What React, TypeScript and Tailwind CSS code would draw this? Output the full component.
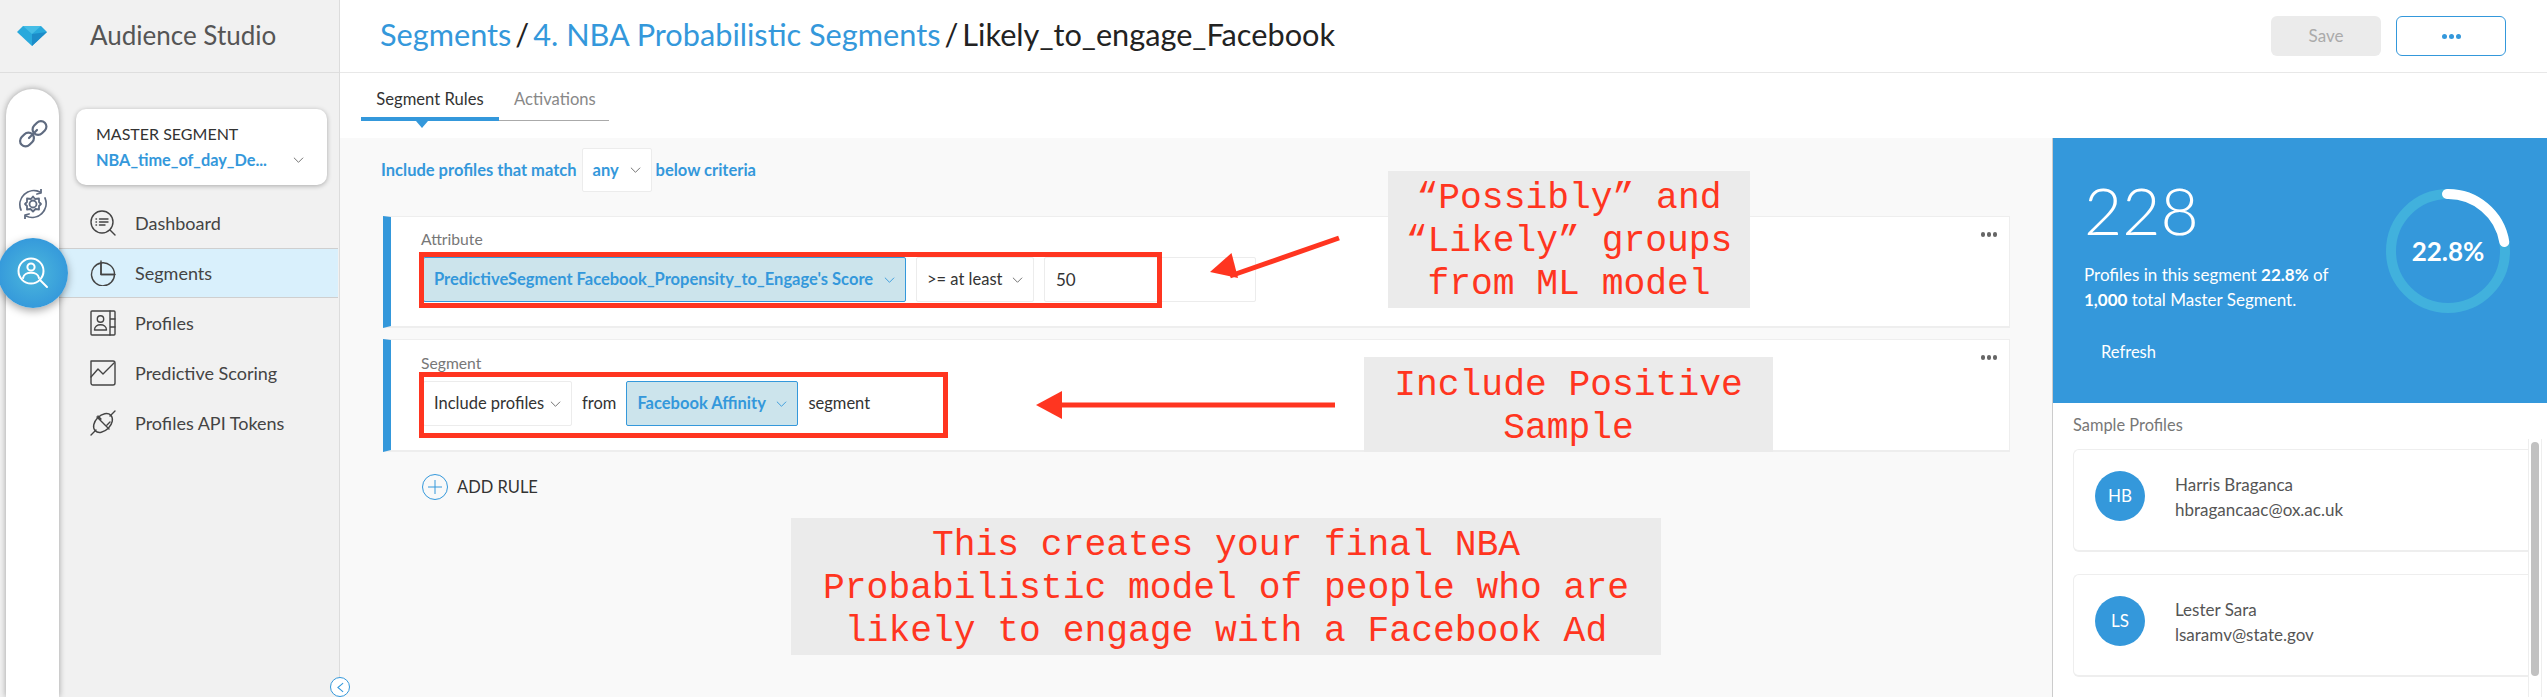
const NUNITO = "font-['Lato','Noto_Sans',sans-serif]";

const Chevron = ({ className = "" }: { className?: string }) => (
  <svg viewBox="0 0 12 8" className={`w-[11px] h-[8px] shrink-0 ${className}`} fill="none" stroke="currentColor" strokeWidth="1">
    <path d="M1 1.5 L6 6.5 L11 1.5" />
  </svg>
);

const NavIcon = ({ name }: { name: string }) => (
  <svg viewBox="0 0 26 26" className="w-[26px] h-[26px] shrink-0" fill="none" stroke="#444" strokeWidth="1.4" strokeLinecap="round" strokeLinejoin="round">
    {name === "dashboard" && (
      <>
        <circle cx="12" cy="12" r="11" />
        <path d="M20 20 L25 25" />
        <path d="M6 9h.5M6 12h.5M6 15h.5M9.5 9H18M9.5 12H18M9.5 15H15" />
      </>
    )}
    {name === "segments" && (
      <>
        <path d="M11 3 A11.5 11.5 0 1 0 24.5 14.5 H11 Z" />
        <path d="M11 3 A11.5 11.5 0 0 1 24.5 14.5" />
        <path d="M11 1 V14.5 H25" />
      </>
    )}
    {name === "profiles" && (
      <>
        <rect x="1" y="1" width="24" height="24" rx="1" />
        <path d="M20 1v24M20 9h5M20 17h5" />
        <circle cx="10.5" cy="9" r="3.2" />
        <path d="M4.5 20c0-7 12-7 12 0Z" />
      </>
    )}
    {name === "scoring" && (
      <>
        <path d="M5 1H23a2 2 0 0 1 2 2V23a2 2 0 0 1-2 2H3a2 2 0 0 1-2-2V1Z" />
        <path d="M1 17 L8 9 L13 14 L24 3" />
      </>
    )}
    {name === "tokens" && (
      <>
        <ellipse cx="13" cy="13" rx="11" ry="7.5" transform="rotate(-45 13 13)" />
        <path d="M7 7 L19 19M1 25 L6 20M20 6 L25 1M11 9 L8 6M17 15 L20 12" />
      </>
    )}
  </svg>
);

const navItems = [
  { name: "dashboard", label: "Dashboard" },
  { name: "segments", label: "Segments", active: true },
  { name: "profiles", label: "Profiles" },
  { name: "scoring", label: "Predictive Scoring" },
  { name: "tokens", label: "Profiles API Tokens" },
];

const Sidebar = () => (
  <aside className="w-[340px] shrink-0 flex flex-col bg-[#f1f1f1] border-r border-[#dcdcdc] relative">
    <div className="h-[73px] shrink-0 flex items-center border-b border-[#dedede]">
      <svg viewBox="0 0 30 20" className="w-[30px] h-[20px] ml-[17px]">
        <polygon points="0,6 6,0 24,0 30,6 15,20" fill="#29a9dc" />
        <polygon points="6,0 24,0 15,8" fill="#45bde6" />
        <polygon points="15,8 30,6 15,20" fill="#1c8cc9" />
      </svg>
      <span className="ml-[43px] text-[26px] leading-[30px] mb-[3px] text-[#555]">Audience Studio</span>
    </div>
    <div className="flex flex-1 min-h-0">
      <div className="w-[53px] ml-[6px] mt-[16px] shrink-0 bg-white rounded-t-[27px] shadow-[0_0_6px_rgba(0,0,0,0.35)] flex flex-col items-center pt-[30px] z-10">
        <svg viewBox="0 0 30 30" className="w-[30px] h-[30px]" fill="none" stroke="#5f6b80" strokeWidth="2.2" strokeLinecap="round" strokeLinejoin="round">
          <rect x="1.5" y="15" width="15" height="11" rx="5.5" transform="rotate(-45 9 20.5)" />
          <rect x="14" y="3.5" width="15" height="11" rx="5.5" transform="rotate(-45 21.5 9)" />
          <path d="M11 19 L19 11" />
        </svg>
        <svg viewBox="0 0 30 30" className="w-[30px] h-[30px] mt-[40px]" fill="none" stroke="#5f6b80" strokeWidth="1.8" strokeLinecap="round" strokeLinejoin="round">
          <path d="M3 21 A14 14 0 0 1 22 3" />
          <path d="M27 9 A14 14 0 0 1 8 27" />
          <path d="M23 0 L23 4 L19 5M7 30 L7 26 L11 25" />
          <circle cx="15" cy="15" r="3.5" />
          <path d="M15 7.5 L17 10 L21 9.5 L21 13 L23 15 L21 17 L21 20.5 L17.5 20 L15 22.5 L12.5 20 L9 20.5 L9 17 L7 15 L9 13 L9 9.5 L13 10 Z" />
        </svg>
        <div className="relative">
          <div className="absolute -left-[35px] top-[19px] w-[70px] h-[70px] rounded-full bg-[radial-gradient(circle,#4cb8dc_0%,#3498db_75%)] shadow-[0_3px_8px_rgba(0,0,0,0.35)] flex items-center justify-center">
            <svg viewBox="0 0 32 32" className="w-[32px] h-[32px]" fill="none" stroke="#fff" strokeWidth="2" strokeLinecap="round">
              <circle cx="14" cy="14" r="12.5" />
              <circle cx="14" cy="10" r="3.6" />
              <path d="M6 21c1-7 15-7 16 0" />
              <path d="M23 23 L30 30" />
            </svg>
          </div>
        </div>
      </div>
      <div className="flex-1 min-w-0 pt-[36px]">
        <div className="ml-[17px] w-[251px] h-[76px] bg-white rounded-[10px] shadow-[0_1px_5px_rgba(0,0,0,0.3)] pl-[20px] pt-[13px] relative">
          <div className="text-[16px] leading-[24px] text-[#333]">MASTER SEGMENT</div>
          <div className="flex items-center text-[#3498db] text-[16.3px] leading-[28px] font-bold">
            <span>NBA_time_of_day_De...</span>
            <Chevron className="ml-[26px] text-[#666]" />
          </div>
        </div>
        <nav className="mt-[13px] pr-[1px]">
          {navItems.map((item) => (
            <div
              key={item.name}
              className={
                item.active
                  ? "h-[50px] flex items-center pl-[31px] bg-[#d9f0fc] border-y border-[#cfcfcf]"
                  : "h-[50px] flex items-center pl-[31px]"
              }
            >
              <NavIcon name={item.name} />
              <span className="ml-[19px] text-[18px] text-[#444]">{item.label}</span>
            </div>
          ))}
        </nav>
      </div>
    </div>
    <div className="absolute right-[-11px] top-[677px] w-[20px] h-[20px] rounded-full bg-white border border-[#3498db] flex items-center justify-center z-20">
      <svg viewBox="0 0 8 12" className="w-[7px] h-[11px]" fill="none" stroke="#3498db" strokeWidth="1.2">
        <path d="M7 1 L1 6 L7 11" />
      </svg>
    </div>
  </aside>
);

const Select = ({ label, w, hi, bold }: { label: string; w: string; hi?: boolean; bold?: boolean }) => (
  <div
    className={`h-[45px] flex items-center justify-between px-[10px] rounded-[2px] border shrink-0 text-[16.5px] ${w} ${
      hi ? "bg-[#cce4ec] border-[#3498db] text-[#3498db]" : "bg-white border-[#ececec] text-[#333]"
    } ${bold ? "font-bold" : ""}`}
  >
    <span className="whitespace-nowrap">{label}</span>
    <Chevron className={hi ? "text-[#3498db]" : "text-[#666]"} />
  </div>
);

const Dots = () => (
  <div className="absolute right-[12px] top-[15px] flex gap-[2px]">
    <span className="w-[4px] h-[5px] rounded-full bg-[#666]" />
    <span className="w-[4px] h-[5px] rounded-full bg-[#666]" />
    <span className="w-[4px] h-[5px] rounded-full bg-[#666]" />
  </div>
);

const Note = ({ className, lines }: { className: string; lines: string[] }) => (
  <div className={`absolute bg-[#ebebeb] pt-[4px] flex flex-col justify-center items-center text-[#ff3520] font-['Liberation_Mono',monospace] text-[36.3px] leading-[43px] whitespace-pre ${className}`}>
    {lines.map((l) => (
      <div key={l}>{l}</div>
    ))}
  </div>
);

const Content = () => (
  <div className="flex-1 min-w-0 bg-[#f9f9f9] pl-[41px] pr-[42px] pt-[10px] relative">
    <div className="flex items-center h-[44px] text-[#3498db] text-[16.5px] font-bold">
      <span>Include profiles that match</span>
      <div className="ml-[5px] mr-[4px] w-[70px] h-[44px] bg-white border border-[#ececec] rounded-[2px] flex items-center justify-between px-[10px]">
        <span>any</span>
        <Chevron className="text-[#666]" />
      </div>
      <span>below criteria</span>
    </div>

    <div className="ml-[2px] mt-[24px] h-[112px] bg-white border border-[#eeeeee] border-b-2 border-l-8 border-l-[#3498db] relative pl-[30px]">
      <div className="h-[40px] pt-[12px] text-[15.7px] leading-[20px] text-[#777]">Attribute</div>
      <div className="flex gap-[10px] ml-[2px]">
        <Select label="PredictiveSegment Facebook_Propensity_to_Engage's Score" w="w-[483px]" hi bold />
        <Select label=">= at least" w="w-[118px]" />
        <div className="w-[212px] h-[45px] bg-white border border-[#ececec] rounded-[2px] flex items-center pl-[11px] text-[17px] text-[#333]">50</div>
      </div>
      <div className="absolute left-[28px] top-[35px] w-[743px] h-[56px] border-[5px] border-[#ff3520]" />
      <Dots />
    </div>

    <div className="ml-[2px] mt-[11px] h-[113px] bg-white border border-[#eeeeee] border-b-2 border-l-8 border-l-[#3498db] relative pl-[30px]">
      <div className="h-[41px] pt-[13px] text-[15.7px] leading-[20px] text-[#777]">Segment</div>
      <div className="flex items-center ml-[2px] text-[16.5px] text-[#333]">
        <Select label="Include profiles" w="w-[149px]" />
        <span className="ml-[10px]">from</span>
        <div className="ml-[10px]">
          <Select label="Facebook Affinity" w="w-[172px]" hi bold />
        </div>
        <span className="ml-[10px]">segment</span>
      </div>
      <div className="absolute left-[28px] top-[32px] w-[529px] h-[66px] border-[5px] border-[#ff3520]" />
      <Dots />
    </div>

    <div className="ml-[41px] mt-[22px] flex items-center">
      <svg viewBox="0 0 26 26" className="w-[26px] h-[26px]" fill="none" stroke="#3498db" strokeWidth="1">
        <circle cx="13" cy="13" r="12.5" />
        <path d="M6 13H20M13 6V20" />
      </svg>
      <span className="ml-[9px] text-[16.5px] text-[#333]">ADD RULE</span>
    </div>

    <Note className="left-[1048px] top-[33px] w-[362px] h-[137px]" lines={["“Possibly” and", "“Likely” groups", "from ML model"]} />
    <Note className="left-[1024px] top-[219px] w-[409px] h-[95px]" lines={["Include Positive", "Sample"]} />
    <Note className="left-[451px] top-[380px] w-[870px] h-[137px]" lines={["This creates your final NBA", "Probabilistic model of people who are", "likely to engage with a Facebook Ad"]} />

    {/* arrows */}
    <svg viewBox="0 0 140 50" className="absolute left-[866px] top-[97px] w-[140px] h-[50px]">
      <path d="M133 3 L24 41" stroke="#ff3520" strokeWidth="5" />
      <polygon points="4,37 25.5,18 32,43" fill="#ff3520" />
    </svg>
    <svg viewBox="0 0 310 40" className="absolute left-[690px] top-[247px] w-[310px] h-[40px]">
      <path d="M305 20 L20 20" stroke="#ff3520" strokeWidth="5" />
      <polygon points="6,20 32,6 32,34" fill="#ff3520" />
    </svg>
  </div>
);

const ProfileCard = ({ initials, name, email }: { initials: string; name: string; email: string }) => (
  <div className="h-[103px] border border-[#eeeeee] border-b-2 border-r-0 rounded-l-[6px] pl-[21px] pt-[21px] flex">
    <div className="w-[50px] h-[50px] rounded-full bg-[#3498db] text-white text-[17px] flex items-center justify-center">{initials}</div>
    <div className="ml-[30px] text-[17px] leading-[25px] text-[#555] pt-[1px]">
      <div>{name}</div>
      <div>{email}</div>
    </div>
  </div>
);

const StatsPanel = () => (
  <div className="w-[495px] shrink-0 flex flex-col border-l border-[#cccccc] bg-white">
    <div className="h-[265px] bg-[#3498db] text-white pl-[31px] pr-[36px] pt-[34px] flex justify-between">
      <div>
        <div className="text-[66px] leading-[76px] font-light">228</div>
        <div className="mt-[14px] text-[17px] leading-[25px]">
          Profiles in this segment <b>22.8%</b> of
          <br />
          <b>1,000</b> total Master Segment.
        </div>
        <div className="mt-[28px] ml-[17px] text-[16.5px] leading-[24px]">Refresh</div>
      </div>
      <div className="relative w-[126px] h-[126px] mt-[16px] flex items-center justify-center">
        <svg viewBox="0 0 126 126" className="absolute inset-0">
          <circle cx="63" cy="63" r="57" fill="none" stroke="#41b1dd" strokeWidth="10" />
          <path d="M62 6 A57 57 0 0 1 119.3 54" fill="none" stroke="#fff" strokeWidth="10" strokeLinecap="round" />
        </svg>
        <span className="text-[26px] font-bold">22.8%</span>
      </div>
    </div>
    <div className="flex-1 relative pl-[20px] pr-[19px]">
      <div className="pt-[11px] text-[16.4px] leading-[22px] text-[#777]">Sample Profiles</div>
      <div className="mt-[13px] flex flex-col gap-[22px]">
        <ProfileCard initials="HB" name="Harris Braganca" email="hbragancaac@ox.ac.uk" />
        <ProfileCard initials="LS" name="Lester Sara" email="lsaramv@state.gov" />
      </div>
      <div className="absolute right-[5px] top-[36px] bottom-0 w-[14px] border-x border-[#eeeeee] flex justify-center pt-[3px]">
        <div className="w-[8px] h-[234px] rounded-full bg-[#c1c1c1]" />
      </div>
    </div>
  </div>
);

export default function App() {
  return (
    <div className={`w-[2547px] h-[697px] flex overflow-hidden bg-white ${NUNITO}`}>
      <Sidebar />
      <main className="flex-1 min-w-0 flex flex-col">
        <header className="h-[73px] shrink-0 border-b border-[#e8e8e8] flex items-center justify-between pl-[40px] pr-[41px]">
          <div className="text-[30.7px] leading-[38px] mb-[3px] text-[#3498db] whitespace-nowrap">
            Segments<span className="text-[#222] mx-[4px]">/</span>4. NBA Probabilistic Segments
            <span className="text-[#222] mx-[4px]">/</span>
            <span className="text-[#222]">Likely_to_engage_Facebook</span>
          </div>
          <div className="flex gap-[15px]">
            <button className="w-[110px] h-[40px] rounded-[6px] bg-[#ebebeb] text-[#aaa] text-[17px]">Save</button>
            <button className="w-[110px] h-[40px] rounded-[6px] border border-[#3498db] flex items-center justify-center gap-[2px]">
              <span className="w-[5px] h-[5px] rounded-full bg-[#3498db]" />
              <span className="w-[5px] h-[5px] rounded-full bg-[#3498db]" />
              <span className="w-[5px] h-[5px] rounded-full bg-[#3498db]" />
            </button>
          </div>
        </header>
        <div className="h-[65px] shrink-0 pl-[21px] pt-[15px]">
          <div className="w-[248px] h-[32px] flex text-[16.6px] leading-[22px] border-b border-[#aaaaaa] box-content relative">
            <div className="w-[138px] text-center text-[#333]">Segment Rules</div>
            <div className="ml-[15px] text-[#888]">Activations</div>
            <div className="absolute left-0 top-[29px] w-[138px] h-[4px] bg-[#3498db]" />
            <div className="absolute left-[55px] top-[33px] border-x-[6px] border-x-transparent border-t-[7px] border-t-[#3498db]" />
          </div>
        </div>
        <div className="flex-1 min-h-0 flex">
          <Content />
          <StatsPanel />
        </div>
      </main>
    </div>
  );
}
